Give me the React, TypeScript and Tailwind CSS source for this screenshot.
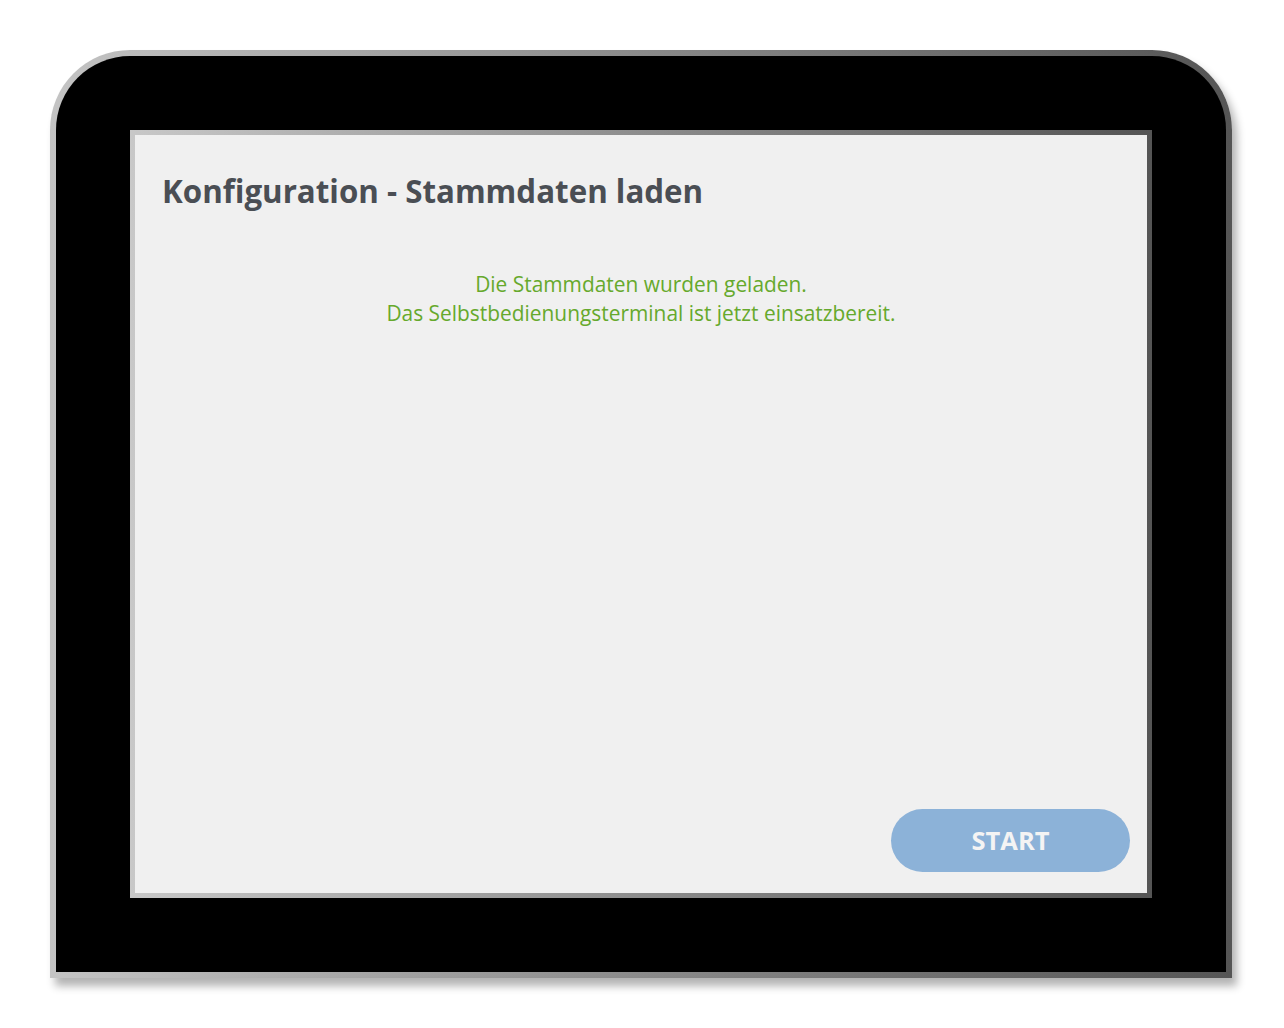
export default function App() {
  return (
    <div className="min-h-[1028px] w-[1284px] bg-white pl-[50px] pt-[50px]" style={{ fontFamily: '"Open Sans", "Liberation Sans", sans-serif' }}>
      <div className="h-[928px] w-[1182px] rounded-t-[80px] bg-gradient-to-r from-[#c4c4c4] to-[#555555] p-[6px] shadow-[5px_8px_9px_rgba(0,0,0,0.3)]">
        <div className="h-full w-full rounded-t-[74px] bg-black p-[74px]">
          <div className="h-full w-full bg-gradient-to-r from-[#c8c8c8] to-[#555555] p-[5px]">
            <div className="flex h-full w-full flex-col bg-[#f0f0f0] pb-[21px] pl-[27px] pr-[17px] pt-[36px]">
              <h1 className="text-[31.3px] font-bold leading-[40px] text-[#4a4e54]">Konfiguration - Stammdaten laden</h1>
              <div className="mt-[59px] pr-[10px] text-center text-[20.9px] leading-[29px] text-[#66a92c]">
                <p>Die Stammdaten wurden geladen.</p>
                <p>Das Selbstbedienungsterminal ist jetzt einsatzbereit.</p>
              </div>
              <div className="mt-auto flex justify-end">
                <button className="h-[63px] w-[239px] rounded-full bg-[#8cb2d8] text-[25.5px] font-bold text-[#f4f4f4]">START</button>
              </div>
            </div>
          </div>
        </div>
      </div>
    </div>
  );
}
